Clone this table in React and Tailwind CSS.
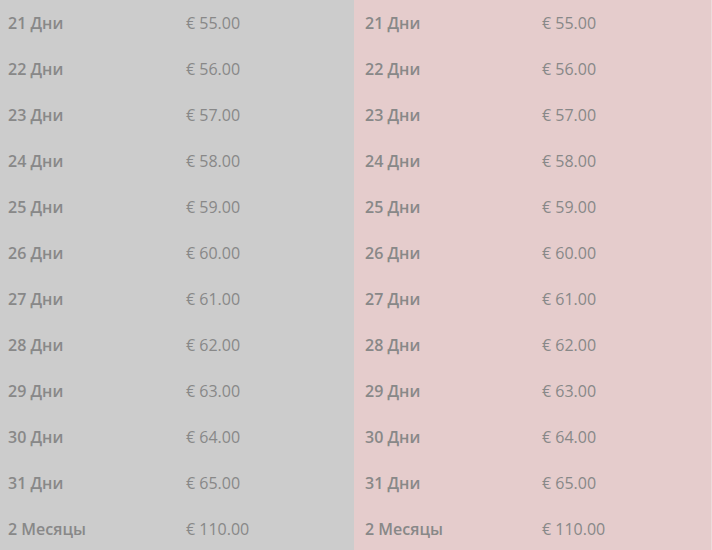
const rows = [
  ["21 Дни", "€ 55.00"],
  ["22 Дни", "€ 56.00"],
  ["23 Дни", "€ 57.00"],
  ["24 Дни", "€ 58.00"],
  ["25 Дни", "€ 59.00"],
  ["26 Дни", "€ 60.00"],
  ["27 Дни", "€ 61.00"],
  ["28 Дни", "€ 62.00"],
  ["29 Дни", "€ 63.00"],
  ["30 Дни", "€ 64.00"],
  ["31 Дни", "€ 65.00"],
  ["2 Месяцы", "€ 110.00"],
];

export default function App() {
  return (
    <div
      className="grid w-[712px] h-[550px] overflow-hidden grid-cols-[354px_357px_1px] text-[16px] text-[#888888]"
      style={{ fontFamily: '"Open Sans", sans-serif' }}
    >
      <div className="flex flex-col bg-[#cccccc]">
        {rows.map(([a, b]) => (
          <div key={a} className="flex h-[46px] shrink-0 items-center pl-[8px]">
            <span className="w-[178px] font-semibold">{a}</span>
            <span>{b}</span>
          </div>
        ))}
      </div>
      <div className="flex flex-col bg-[#e5cccc]">
        {rows.map(([a, b]) => (
          <div key={a} className="flex h-[46px] shrink-0 items-center pl-[11px]">
            <span className="w-[177px] font-semibold">{a}</span>
            <span>{b}</span>
          </div>
        ))}
      </div>
      <div className="bg-[#ecdcdc]" />
    </div>
  );
}
